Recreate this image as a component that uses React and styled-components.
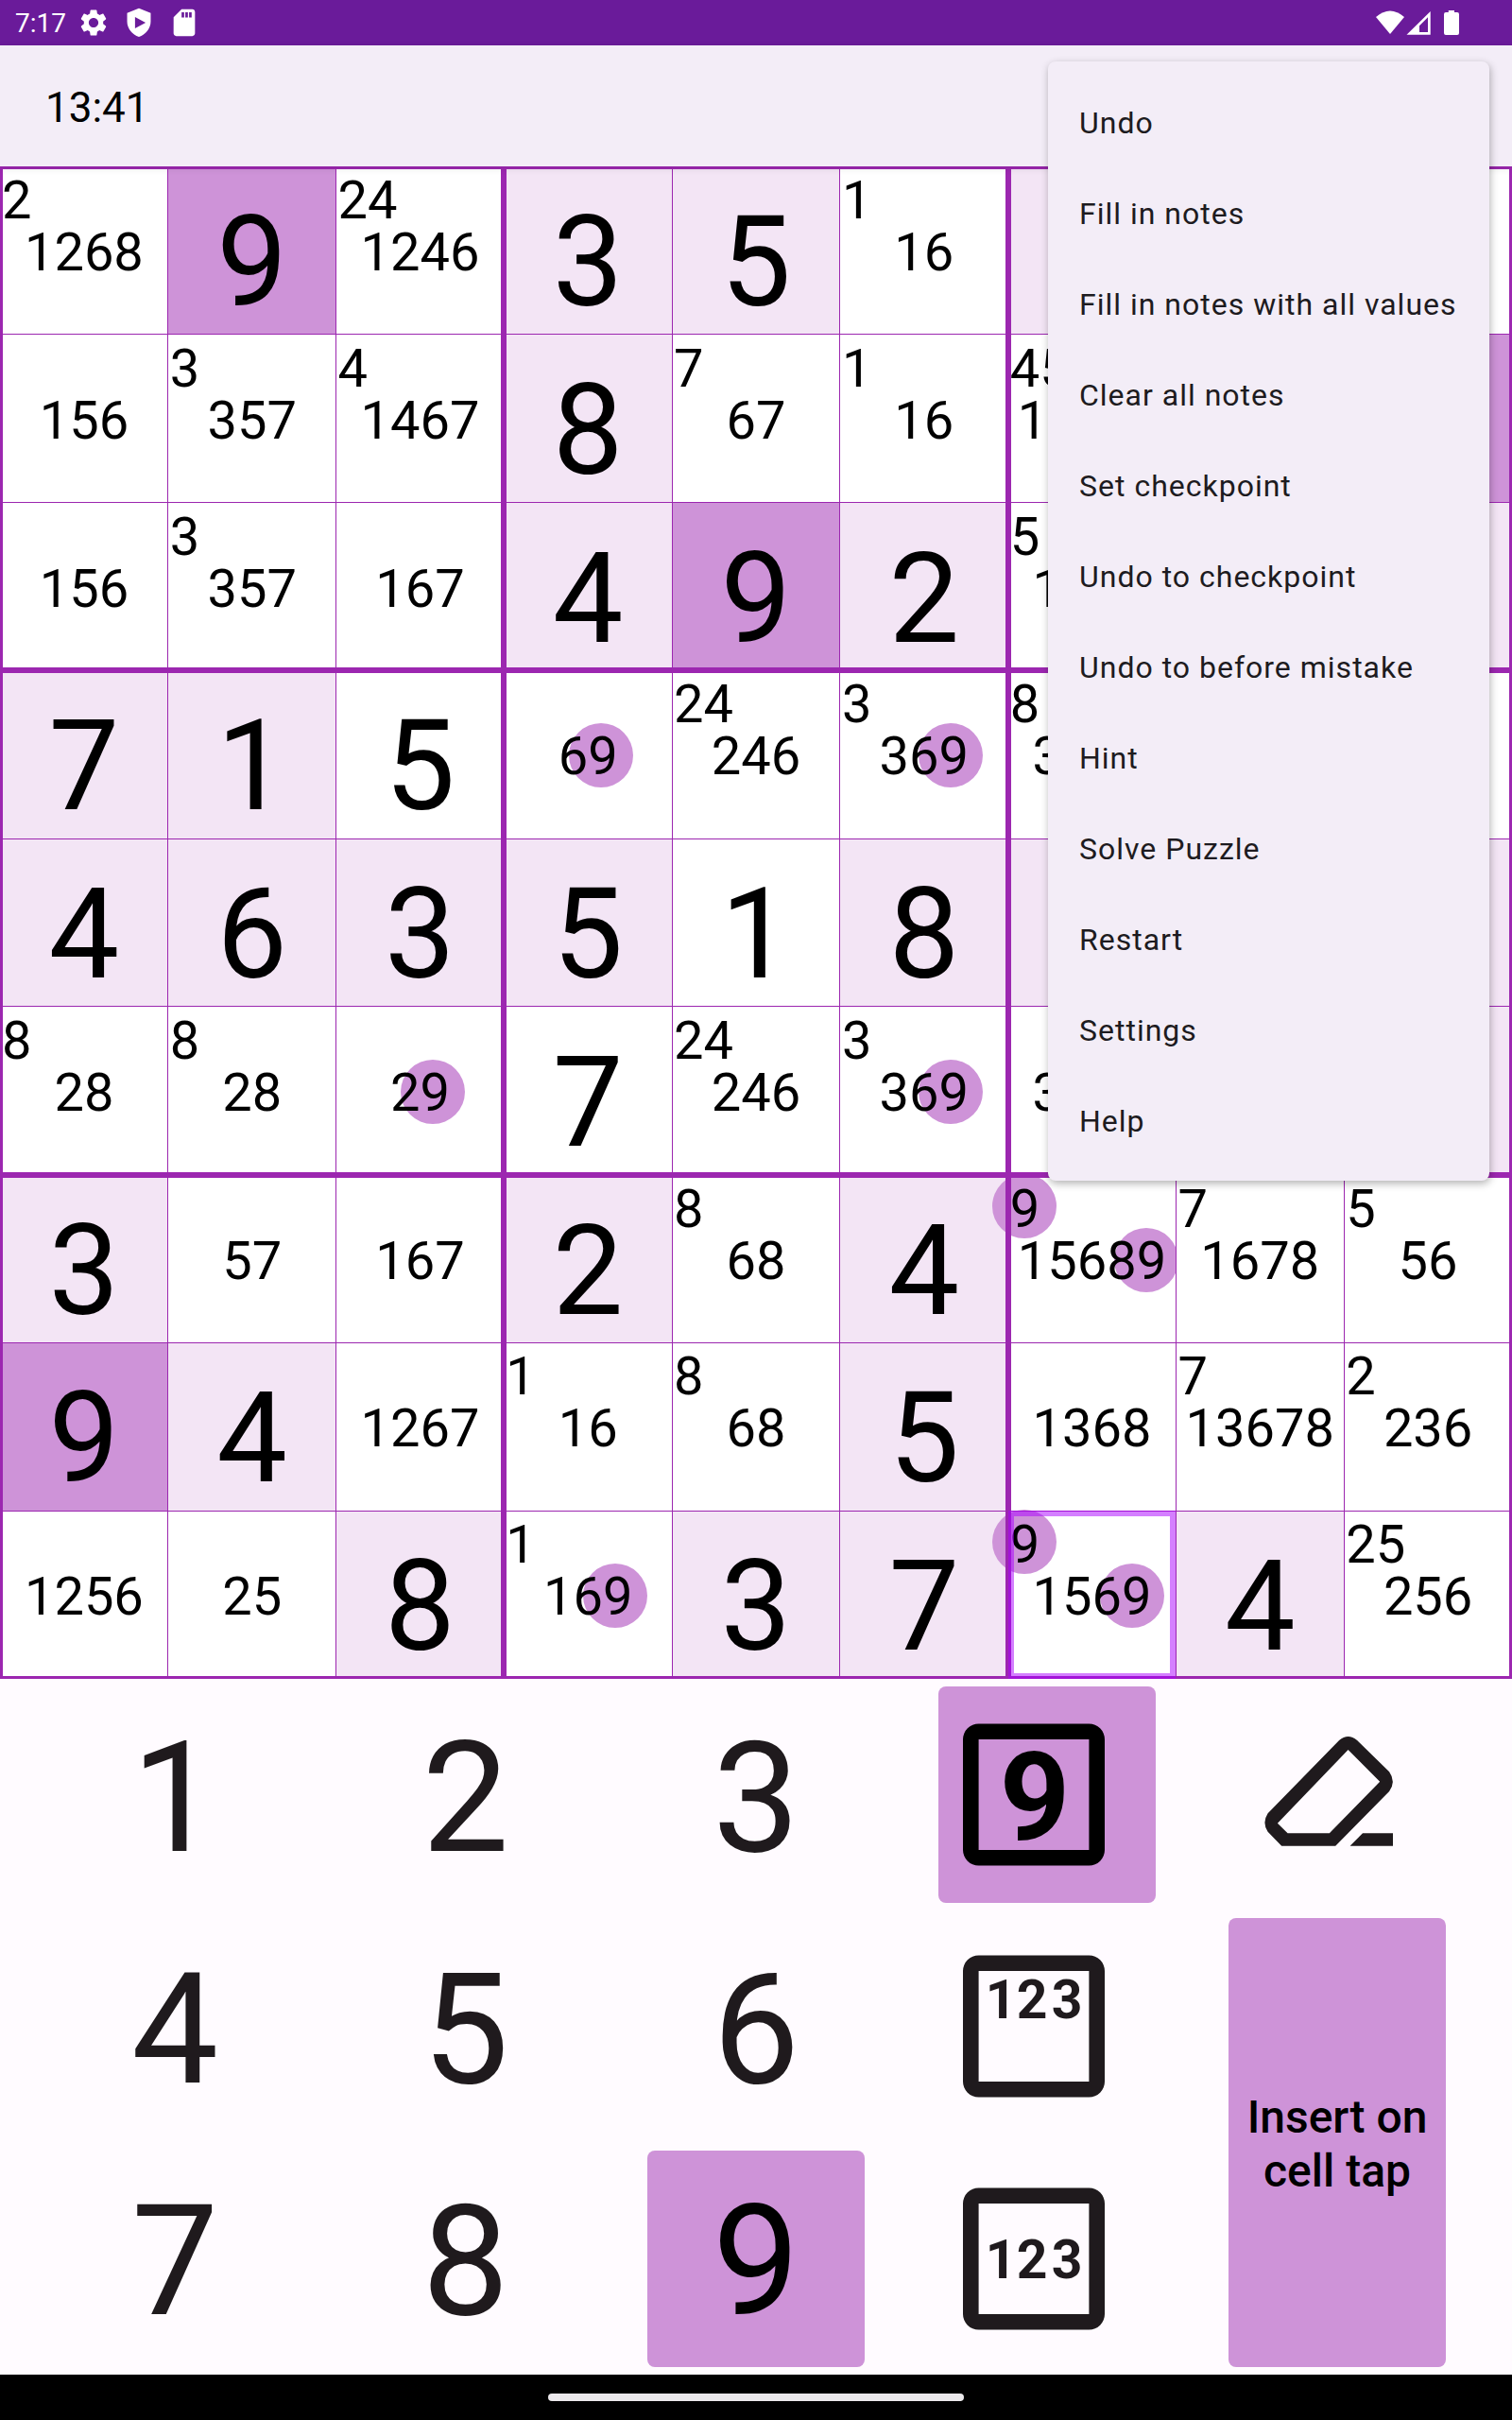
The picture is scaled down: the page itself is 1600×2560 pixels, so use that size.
import React, { useState } from "react";
import styled, { createGlobalStyle, css } from "styled-components";

const color = {
  status: "#6a1b9a",
  surface: "#f3edf7",
  page: "#fffbff",
  line: "#9c27b0",
  given: "#f3e5f5",
  accent: "#ce93d8",
  ink: "#1f1a1d",
};

const GlobalStyle = createGlobalStyle`
  *, *::before, *::after { box-sizing: border-box; }
  body {
    margin: 0;
    background: ${color.page};
    font-family: Roboto, "Liberation Sans", sans-serif;
    color: #000;
  }
  button {
    margin: 0;
    padding: 0;
    border: 0;
    background: none;
    color: inherit;
    font: inherit;
    cursor: pointer;
  }
`;

const Screen = styled.div`
  position: relative;
  display: flex;
  flex-direction: column;
  min-height: 100vh;
`;

/* ---------- status bar ---------- */

const StatusBar = styled.div`
  display: flex;
  align-items: center;
  justify-content: space-between;
  height: 48px;
  padding: 0 24px 0 16px;
  background: ${color.status};
  color: #fff;
`;

const StatusGroup = styled.div`
  display: flex;
  align-items: center;
  gap: ${(p) => p.$gap}px;
`;

const Clock = styled.span`
  padding-top: 2px;
  font-size: 28px;
  line-height: 48px;
`;

const StatusIcon = styled.svg`
  display: block;
  width: 34px;
  height: 34px;
  fill: #fff;
`;

const SystemIcons = styled.svg`
  display: block;
  width: 120px;
  height: 48px;
  fill: #fff;
`;

/* ---------- header ---------- */

const Header = styled.header`
  position: relative;
  z-index: 1;
  display: flex;
  align-items: center;
  height: 128px;
  padding: 4px 48px 0;
  background: ${color.surface};
  box-shadow: 0 2px 8px rgba(0, 0, 0, 0.1);
`;

const Timer = styled.time`
  font-size: 44px;
  line-height: 52px;
`;

/* ---------- board ---------- */

const Board = styled.main`
  position: relative;
  display: grid;
  grid-template-columns: repeat(9, minmax(0, 1fr));
  grid-template-rows: repeat(9, minmax(0, 1fr));
  aspect-ratio: 1;
  background: #fff;
`;

const ninth = "calc(100% / 9)";
const third = "calc(100% / 3)";

const rules = (dir, size, step) => css`
  repeating-linear-gradient(
    ${dir},
    ${color.line} 0,
    ${color.line} calc(${size}px / 2),
    transparent calc(${size}px / 2),
    transparent calc(${step} - ${size}px / 2),
    ${color.line} calc(${step} - ${size}px / 2),
    ${color.line} ${step}
  )
`;

const BoardLines = styled.div`
  position: absolute;
  inset: 0;
  pointer-events: none;
  background:
    ${rules("to right", 6, third)},
    ${rules("to bottom", 6, third)},
    ${rules("to right", 1, ninth)},
    ${rules("to bottom", 1, ninth)};
`;

const fills = { given: color.given, match: color.accent, plain: "#fff" };

const Cell = styled.button`
  position: relative;
  isolation: isolate;
  display: flex;
  flex-direction: column;
  justify-content: flex-start;
  align-items: stretch;
  min-width: 0;
  background: ${(p) => fills[p.$kind]};
`;

const CellDigit = styled.span`
  padding-top: 26px;
  font-size: 133px;
  line-height: 151px;
  text-align: center;
`;

const CornerNotes = styled.span`
  height: 55px;
  padding-left: 2px;
  font-size: 56px;
  line-height: 72px;
  text-align: left;
`;

const CenterNotes = styled.span`
  font-size: 56px;
  line-height: 72px;
  text-align: center;
`;

/* The halo trails slightly behind the digit as the run of notes grows. */
const MarkedDigit = styled.span`
  position: relative;

  &::before {
    content: "";
    position: absolute;
    z-index: -1;
    top: calc(50% - ${(p) => (p.$index === 0 ? 37 : 35)}px);
    left: calc(50% - ${(p) => 34 + Math.round(p.$index * 1.6)}px);
    width: 68px;
    height: 68px;
    border-radius: 50%;
    background: ${color.accent};
  }
`;

const SelectionGrid = styled.div`
  position: absolute;
  inset: 0;
  display: grid;
  grid-template-columns: repeat(9, minmax(0, 1fr));
  grid-template-rows: repeat(9, minmax(0, 1fr));
  pointer-events: none;
`;

const Selection = styled.span`
  grid-row: ${(p) => p.$row};
  grid-column: ${(p) => p.$col};
  border: 6px solid rgba(170, 0, 255, 0.5);
`;

/* ---------- keypad ---------- */

const Keypad = styled.section`
  display: grid;
  flex: 1;
  grid-template-columns: repeat(5, 230px);
  grid-template-rows: repeat(3, minmax(0, 1fr));
  justify-content: space-between;
  row-gap: 16px;
  padding: 8px 70px;
`;

const Key = styled.button`
  display: flex;
  align-items: center;
  justify-content: center;
  border-radius: 8px;
  background: ${(p) => (p.$active ? color.accent : "transparent")};
  color: ${(p) => (p.$active ? "#000" : color.ink)};
`;

const DigitKey = styled(Key)`
  padding-top: 6px;
  font-size: 164px;
  line-height: 192px;
`;

const InsertKey = styled(Key)`
  grid-row: 2 / span 2;
  grid-column: 5;
  padding: 2px 16px 0;
  font-size: 48px;
  font-weight: 500;
  line-height: 57px;
  text-align: center;
`;

const KeyIcon = styled.svg`
  display: block;
  width: 230px;
  height: 229px;
  fill: currentColor;
`;

const IconDigit = styled.text`
  font-family: Roboto, sans-serif;
  font-size: ${(p) => (p.$small ? 57 : 130)}px;
  font-weight: 700;
  text-anchor: middle;
`;

/* ---------- navigation bar ---------- */

const NavBar = styled.footer`
  display: flex;
  align-items: center;
  justify-content: center;
  height: 48px;
  background: #000;
`;

const NavHandle = styled.span`
  width: 440px;
  height: 8px;
  border-radius: 4px;
  background: #ece9ec;
`;

/* ---------- menu ---------- */

const Menu = styled.ul`
  position: absolute;
  z-index: 2;
  top: 65px;
  right: 24px;
  margin: 0;
  padding: 16px 0;
  list-style: none;
  border-radius: 8px;
  background: ${color.surface};
  box-shadow: 1px 3px 8px rgba(0, 0, 0, 0.3);
`;

const MenuItem = styled.button`
  display: block;
  width: 100%;
  min-width: 467px;
  height: 96px;
  padding: 2px 32px 0 33px;
  color: #1d1b20;
  font-size: 32px;
  letter-spacing: 1px;
  line-height: 48px;
  text-align: left;
  white-space: nowrap;
`;

/* ---------- data ---------- */

const g = (digit) => ({ kind: "given", digit });
const m = (digit) => ({ kind: "match", digit });
const u = (digit) => ({ kind: "plain", digit });
const n = (center, corner = "") => ({ kind: "plain", center, corner });

const puzzle = [
  [n("1268", "2"), m("9"), n("1246", "24"), g("3"), g("5"), n("16", "1"), g(""), n(""), n("")],
  [n("156"), n("357", "3"), n("1467", "4"), g("8"), n("67", "7"), n("16", "1"), n("14567", "45"), n(""), m("")],
  [n("156"), n("357", "3"), n("167"), g("4"), m("9"), g("2"), n("1567", "5"), n(""), g("")],
  [g("7"), g("1"), u("5"), n("69"), n("246", "24"), n("369", "3"), n("3468", "8"), n(""), n("")],
  [g("4"), g("6"), g("3"), g("5"), u("1"), g("8"), g(""), n(""), g("")],
  [n("28", "8"), n("28", "8"), n("29"), u("7"), n("246", "24"), n("369", "3"), n("3469"), n(""), g("")],
  [g("3"), n("57"), n("167"), g("2"), n("68", "8"), g("4"), n("15689", "9"), n("1678", "7"), n("56", "5")],
  [m("9"), g("4"), n("1267"), n("16", "1"), n("68", "8"), g("5"), n("1368"), n("13678", "7"), n("236", "2")],
  [n("1256"), n("25"), g("8"), n("169", "1"), g("3"), g("7"), n("1569", "9"), g("4"), n("256", "25")],
];

const menuItems = [
  "Undo",
  "Fill in notes",
  "Fill in notes with all values",
  "Clear all notes",
  "Set checkpoint",
  "Undo to checkpoint",
  "Undo to before mistake",
  "Hint",
  "Solve Puzzle",
  "Restart",
  "Settings",
  "Help",
];

function Notes({ text, marked }) {
  return [...text].map((d, i) =>
    d === marked ? (
      <MarkedDigit key={d} $index={i}>
        {d}
      </MarkedDigit>
    ) : (
      d
    )
  );
}

function BoardCell({ cell, row, col, marked, onSelect }) {
  return (
    <Cell
      type="button"
      $kind={cell.kind}
      aria-label={`Row ${row + 1}, column ${col + 1}`}
      onClick={onSelect}
    >
      {cell.digit !== undefined ? (
        <CellDigit>{cell.digit}</CellDigit>
      ) : (
        <>
          <CornerNotes>
            <Notes text={cell.corner} marked={marked} />
          </CornerNotes>
          <CenterNotes>
            <Notes text={cell.center} marked={marked} />
          </CenterNotes>
        </>
      )}
    </Cell>
  );
}

/* ---------- icons ---------- */

const FRAME =
  "M42.6 39.5H159.4A16.6 16.6 0 0 1 176 56.1V173A16.6 16.6 0 0 1 159.4 189.6H42.6A16.6 16.6 0 0 1 26 173V56.1A16.6 16.6 0 0 1 42.6 39.5ZM42.6 56.1V173H159.4V56.1Z";

function ValueIcon() {
  return (
    <KeyIcon viewBox="0 0 230 229" aria-hidden="true">
      <path fillRule="evenodd" d={FRAME} />
      <IconDigit x="102" y="162">9</IconDigit>
    </KeyIcon>
  );
}

function NotesIcon({ baseline }) {
  return (
    <KeyIcon viewBox="0 0 230 229" aria-hidden="true">
      <path fillRule="evenodd" d={FRAME} />
      <IconDigit $small x="66" y={baseline}>1</IconDigit>
      <IconDigit $small x="99" y={baseline}>2</IconDigit>
      <IconDigit $small x="136" y={baseline}>3</IconDigit>
    </KeyIcon>
  );
}

function EraserIcon() {
  return (
    <KeyIcon viewBox="0 0 230 229" aria-hidden="true">
      <path
        fillRule="evenodd"
        d="M117.1 57Q126.6 49 136.1 57L170.1 90.3Q177.5 100.7 170.1 111L113.2 168.7H56.2L41.6 153.7Q35.2 144.3 41.6 134.3ZM126.6 67L51.9 144.7L62.6 155.3H106.8L160.2 100.7Z"
      />
      <path d="M128.6 168.7L142 155.3H174V168.7Z" />
    </KeyIcon>
  );
}

export default function App() {
  const [value, setValue] = useState("9");
  const [selected, setSelected] = useState([8, 6]);
  const [mode, setMode] = useState("value");

  const digitKey = (d) => (
    <DigitKey
      key={d}
      type="button"
      $active={d === value}
      aria-pressed={d === value}
      onClick={() => setValue(d)}
    >
      {d}
    </DigitKey>
  );

  const modeKey = (id, label, icon) => (
    <Key
      type="button"
      $active={mode === id}
      aria-label={label}
      aria-pressed={mode === id}
      onClick={() => setMode(id)}
    >
      {icon}
    </Key>
  );

  return (
    <Screen>
      <GlobalStyle />
      <StatusBar>
        <StatusGroup $gap={12}>
          <Clock>7:17</Clock>
          <StatusGroup $gap={14}>
            <StatusIcon viewBox="0 0 24 24" aria-hidden="true">
              <path d="M19.14 12.94c.04-.3.06-.61.06-.94 0-.32-.02-.64-.07-.94l2.03-1.58c.18-.14.23-.41.12-.61l-1.92-3.32c-.12-.22-.37-.29-.59-.22l-2.39.96c-.5-.38-1.03-.7-1.62-.94l-.36-2.54c-.04-.24-.24-.41-.48-.41h-3.84c-.24 0-.43.17-.47.41l-.36 2.54c-.59.24-1.13.57-1.62.94l-2.39-.96c-.22-.08-.47 0-.59.22L2.74 8.87c-.12.21-.08.47.12.61l2.03 1.58c-.05.3-.09.63-.09.94s.02.64.07.94l-2.03 1.58c-.18.14-.23.41-.12.61l1.92 3.32c.12.22.37.29.59.22l2.39-.96c.5.38 1.03.7 1.62.94l.36 2.54c.05.24.24.41.48.41h3.84c.24 0 .44-.17.47-.41l.36-2.54c.59-.24 1.13-.56 1.62-.94l2.39.96c.22.08.47 0 .59-.22l1.92-3.32c.12-.22.07-.47-.12-.61l-2.01-1.58zM12 15.6c-1.98 0-3.6-1.62-3.6-3.6s1.62-3.6 3.6-3.6 3.6 1.62 3.6 3.6-1.62 3.6-3.6 3.6z" />
            </StatusIcon>
            <StatusIcon viewBox="0 0 24 24" aria-hidden="true">
              <path
                fillRule="evenodd"
                d="M12 1.3L3.2 4.8V11.2C3.2 16.4 7 21.2 12 22.6C17 21.2 20.8 16.4 20.8 11.2V4.8ZM9.1 7.7V16.3L17 12Z"
              />
            </StatusIcon>
            <StatusIcon viewBox="0 0 24 24" aria-hidden="true">
              <path
                fillRule="evenodd"
                d="M18 2h-8L4.02 8 4 20c0 1.1.9 2 2 2h12c1.1 0 2-.9 2-2V4c0-1.1-.9-2-2-2zM10 4.2v4h1.9v-4zM12.8 4.2v4h1.9v-4zM15.6 4.2v4h1.9v-4z"
              />
            </StatusIcon>
          </StatusGroup>
        </StatusGroup>
        <SystemIcons viewBox="1456 0 120 48" aria-hidden="true">
          <path d="M1456 18Q1471 5 1486 18L1471 36Z" />
          <path fillRule="evenodd" d="M1488.5 36.7L1513.7 12V36.7ZM1502 34H1511V18.2L1502 27.2Z" />
          <path d="M1532.8 11H1539V13H1542Q1544 13 1544 15V35Q1544 37 1542 37H1530Q1528 37 1528 35V15Q1528 13 1530 13H1532.8Z" />
        </SystemIcons>
      </StatusBar>

      <Header>
        <Timer>13:41</Timer>
      </Header>

      <Board>
        {puzzle.map((cells, r) =>
          cells.map((cell, c) => (
            <BoardCell
              key={`${r}-${c}`}
              cell={cell}
              row={r}
              col={c}
              marked={value}
              onSelect={() => setSelected([r, c])}
            />
          ))
        )}
        <BoardLines />
        <SelectionGrid>
          <Selection $row={selected[0] + 1} $col={selected[1] + 1} />
        </SelectionGrid>
      </Board>

      <Keypad>
        {["1", "2", "3"].map(digitKey)}
        {modeKey("value", "Enter value", <ValueIcon />)}
        <Key type="button" aria-label="Erase">
          <EraserIcon />
        </Key>
        {["4", "5", "6"].map(digitKey)}
        {modeKey("corner", "Corner notes", <NotesIcon baseline={106} />)}
        <InsertKey type="button" $active aria-pressed="true">
          Insert on cell tap
        </InsertKey>
        {["7", "8", "9"].map(digitKey)}
        {modeKey("center", "Center notes", <NotesIcon baseline={135} />)}
      </Keypad>

      <NavBar>
        <NavHandle />
      </NavBar>

      <Menu>
        {menuItems.map((item) => (
          <li key={item}>
            <MenuItem type="button">{item}</MenuItem>
          </li>
        ))}
      </Menu>
    </Screen>
  );
}
